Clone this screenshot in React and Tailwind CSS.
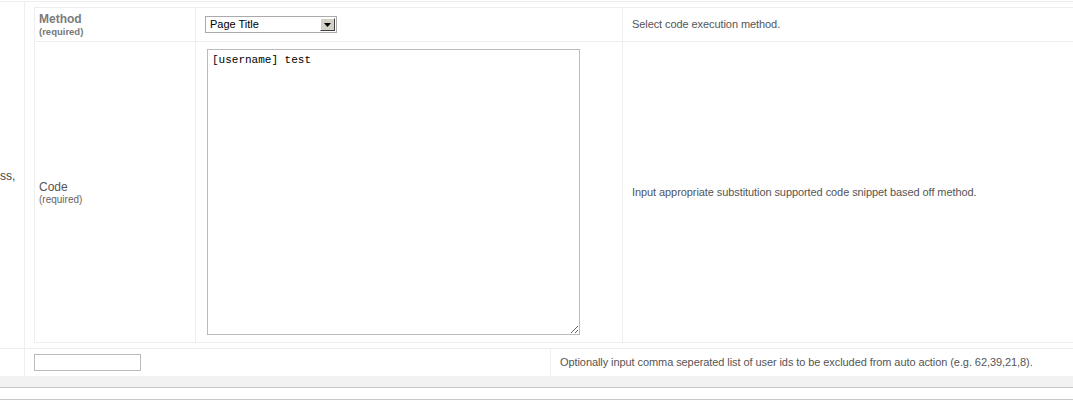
export default function App() {
  return (
    <div className="w-[1073px] h-[400px] overflow-hidden bg-white pt-px font-['Liberation_Sans',Arial,sans-serif] text-[11px] text-[#555]">
      <div className="flex border-t border-b border-[#eeeeee]">
        <div className="w-[25px] shrink-0 border-r border-[#eeeeee] flex items-center overflow-hidden">
          <span className="text-[12px] text-[#444] pt-[2px]">ss,</span>
        </div>
        <div className="flex-1 pl-[9px] pt-[5px] pb-[5px]">
          <div className="w-[1060px] border border-[#eeeeee]">
            <div className="flex h-[34px] border-b border-[#eeeeee]">
              <div className="w-[161px] shrink-0 border-r border-[#eeeeee] pl-[4px] flex flex-col justify-center">
                <div className="font-bold text-[12px] text-[#7b7b7b] leading-[13px]">Method</div>
                <div className="font-bold text-[9.5px] text-[#777] leading-[11px]">(required)</div>
              </div>
              <div className="w-[427px] shrink-0 border-r border-[#eeeeee] pl-[9px] flex items-center">
                <div className="w-[132px] h-[17px] border border-[#aaaaaa] bg-white flex items-center justify-between pl-[4px] pr-px">
                  <span className="text-[11px] text-black leading-none">Page Title</span>
                  <span className="w-[15px] h-[13px] bg-[#d4d0c8] border border-t-white border-l-white border-r-[#404040] border-b-[#404040] flex items-end justify-center pb-[3px]">
                    <svg width="7" height="4" viewBox="0 0 7 4">
                      <path d="M0 0h7L3.5 4z" fill="#000" />
                    </svg>
                  </span>
                </div>
              </div>
              <div className="flex-1 pl-[9px] flex items-center tracking-[-0.08px]">Select code execution method.</div>
            </div>
            <div className="flex h-[300px]">
              <div className="w-[161px] shrink-0 border-r border-[#eeeeee] pl-[4px] flex flex-col justify-center pt-[2px]">
                <div className="text-[12px] text-[#555] leading-[13px]">Code</div>
                <div className="text-[10px] text-[#6a5f5f] leading-[11px]">(required)</div>
              </div>
              <div className="w-[427px] shrink-0 border-r border-[#eeeeee] pl-[11px] pt-[7px]">
                <textarea
                  defaultValue="[username] test"
                  className="block w-[373px] h-[286px] border border-[#bbbbbb] px-[4px] py-[3px] font-['Liberation_Mono',monospace] text-[11px] text-black leading-[14px] outline-none resize"
                />
              </div>
              <div className="flex-1 pl-[9px] flex items-center tracking-[-0.08px]">
                Input appropriate substitution supported code snippet based off method.
              </div>
            </div>
          </div>
        </div>
      </div>
      <div className="flex h-[27px]">
        <div className="w-[25px] shrink-0 border-r border-[#eeeeee]" />
        <div className="w-[525px] shrink-0 pl-[9px] pt-[5px]">
          <div className="w-[107px] h-[17px] border border-[#bbbbbb]" />
        </div>
        <div className="flex-1 border-l border-[#eeeeee] pl-[9px] flex items-center tracking-[-0.08px]">
          Optionally input comma seperated list of user ids to be excluded from auto action (e.g. 62,39,21,8).
        </div>
      </div>
      <div className="h-[12px] bg-[#f2f2f2] border-b border-[#c8c8c8]" />
      <div className="h-[12px] border-b border-[#c8c8c8]" />
    </div>
  );
}
